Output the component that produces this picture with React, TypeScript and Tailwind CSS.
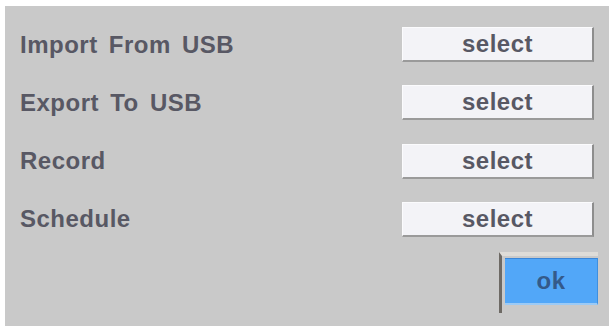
import React from "react";

const rows = ["Import From USB", "Export To USB", "Record", "Schedule"];

export default function App() {
  return (
    <div className="w-[609px] h-[326px] bg-white pl-[5px] pt-[6px] overflow-hidden" style={{ fontFamily: '"Liberation Sans", Arial, sans-serif' }}>
      <div className="w-full h-full bg-[#c9c9c9] pt-[21px] pl-[15px] pr-[15px] flex flex-col">
        <div className="flex flex-col gap-[23.3px]">
          {rows.map((r) => (
            <div key={r} className="flex items-center justify-between h-[35px]">
              <span className="text-[24px] font-bold text-[#585864] tracking-[0.5px] [word-spacing:4px]">{r}</span>
              <div className="w-[192px] h-[35px] bg-[#f3f3f7] border-t border-l border-[#fbfbfd] border-r-2 border-b-2 border-r-[#8d8d8d] border-b-[#9a9a9a] flex items-center justify-center">
                <span className="text-[24px] font-bold text-[#585864] tracking-[0.5px]">select</span>
              </div>
            </div>
          ))}
        </div>
        <div className="flex justify-end mt-[15px] -mr-[4px]">
          <div className="w-[99px] h-[61px] border-l-[3px] border-l-[#6d6964] border-t-[4px] border-t-[#dedcd8] pl-[3px] pt-[2px] pb-[8px] flex">
            <div className="flex-1 bg-[#52a7f8] border-b-2 border-b-[#9ccaf5] border-r border-r-[#3d8fe0] border-t border-t-[#3a86d8] flex items-center justify-center">
              <span className="text-[24px] font-bold text-[#345a8a] tracking-[0.5px]">ok</span>
            </div>
          </div>
        </div>
      </div>
    </div>
  );
}
